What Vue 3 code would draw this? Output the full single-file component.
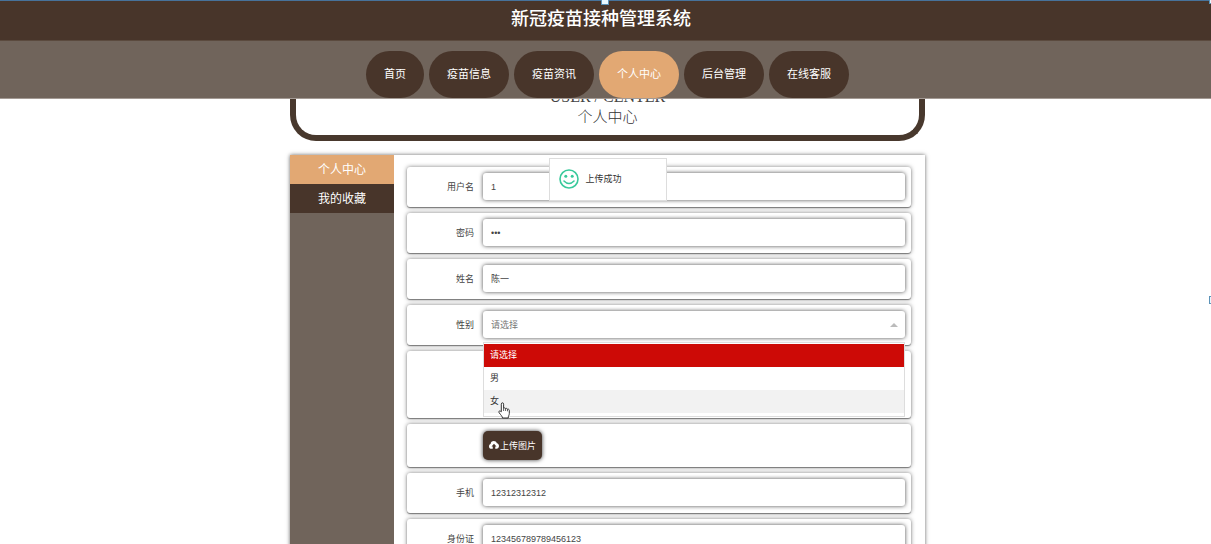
<script setup>
import { ref } from 'vue'

const links = ['首页', '疫苗信息', '疫苗资讯', '个人中心', '后台管理', '在线客服']
const current = '个人中心'
const options = ['请选择', '男', '女']
const gender = ref('请选择')
const hovered = '女'
const form = ref({ user: '1', password: '123', name: '陈一', phone: '12312312312', card: '123456789789456123' })
</script>

<template>
  <div class="page">
    <header class="top">
      <i class="handle handle-top"></i>
      <i class="handle handle-corner"></i>
      <h1>新冠疫苗接种管理系统</h1>
      <nav>
        <a v-for="l in links" :key="l" href="#" :class="{ active: l === current }">{{ l }}</a>
      </nav>
    </header>
    <i class="handle handle-side"></i>

    <div class="container">
      <section class="banner">
        <p class="en">USER / CENTER</p>
        <h2>个人中心</h2>
      </section>

      <main class="panel">
        <aside>
          <a href="#" class="active">个人中心</a>
          <a href="#">我的收藏</a>
        </aside>
        <form @submit.prevent>
          <div class="row">
            <label for="user">用户名</label>
            <input id="user" v-model="form.user" class="field" type="text" />
          </div>
          <div class="row">
            <label for="password">密码</label>
            <input id="password" v-model="form.password" class="field" type="password" />
          </div>
          <div class="row">
            <label for="name">姓名</label>
            <input id="name" v-model="form.name" class="field" type="text" />
          </div>
          <div class="row">
            <label for="gender">性别</label>
            <div class="select">
              <select id="gender" v-model="gender" class="field">
                <option v-for="o in options" :key="o">{{ o }}</option>
              </select>
              <i class="arrow"></i>
              <ul class="menu" role="listbox" aria-label="性别">
                <li v-for="o in options" :key="o" role="option" :aria-selected="o === gender"
                  :class="{ chosen: o === gender, hover: o === hovered }" @click="gender = o">
                  {{ o }}
                  <svg v-if="o === hovered" class="cursor" viewBox="0 0 12 17" width="12" height="17">
                    <path d="M3.3 9.8V2.2C3.3.3 5.6.3 5.6 2.2V6.3C6.2 5.6 7.4 5.8 7.6 6.7C8.3 6.1 9.3 6.4 9.5 7.3C10.3 6.9 11.3 7.3 11.3 8.4V11.5C11.3 13.2 10.2 14 10.2 16H4.5C4.3 14.3 2.8 13 1.2 10.8C.1 9.3 1.5 8.2 3.3 9.8Z" fill="#fff" stroke="#333" stroke-width="1" stroke-linejoin="round" />
                    <path d="M5.6 6.3V9M7.6 6.7V9M9.5 7.3V9.3" fill="none" stroke="#333" stroke-width=".8" />
                  </svg>
                </li>
              </ul>
            </div>
          </div>
          <div class="row photo"></div>
          <div class="row upload">
            <button type="button">
              <svg viewBox="0 0 20 16" width="10" height="8">
                <path d="M5 15.5C2 15.5 0 13.5 0 10.8C0 8.4 1.5 6.8 3.2 6.2C3.3 2.6 6 0 9.5 0C12.5 0 14.8 1.8 15.7 4.6C18.3 5 20 7.3 20 10C20 13.2 17.8 15.5 15 15.5H12.5V11H15L10 5.5L5 11H7.5V15.5Z" fill="#fff" />
              </svg>
              <span>上传图片</span>
            </button>
          </div>
          <div class="row">
            <label for="phone">手机</label>
            <input id="phone" v-model="form.phone" class="field" type="text" />
          </div>
          <div class="row">
            <label for="card">身份证</label>
            <input id="card" v-model="form.card" class="field" type="text" />
          </div>
        </form>
      </main>
    </div>

    <div class="toast" role="status">
      <svg viewBox="0 0 20 20" width="20" height="20">
        <circle cx="10" cy="10" r="9" fill="none" stroke="#39c99b" stroke-width="1.6" />
        <circle cx="6.8" cy="7.3" r="1.5" fill="#39c99b" />
        <circle cx="13.2" cy="7.3" r="1.5" fill="#39c99b" />
        <path d="M5 12Q10 17 15 12" fill="none" stroke="#39c99b" stroke-width="1.6" stroke-linecap="round" />
      </svg>
      <span>上传成功</span>
    </div>
  </div>
</template>

<style>
html {
  scrollbar-width: none;
}
body {
  background: #fff;
}
</style>

<style scoped>
.page {
  font-family: "Liberation Sans", "Noto Sans CJK SC", sans-serif;
  font-size: 9px;
  color: #444;
}
.page * {
  box-sizing: border-box;
}
a {
  color: #fff;
  text-decoration: none;
}
.top {
  position: fixed;
  z-index: 10;
  top: 0;
  left: 0;
  right: 0;
  background: #70645b;
  border-bottom: 1px solid #a39a94;
}
h1 {
  margin: 0;
  padding-right: 9px;
  height: 41px;
  line-height: 36px;
  border-top: 1px solid #47729a;
  border-bottom: 1px solid #5b4a3e;
  background: #48352a;
  color: #fff;
  font-size: 18px;
  font-weight: 500;
  text-align: center;
}
nav {
  display: flex;
  justify-content: center;
  gap: 5px;
  padding: 10px 0 0 4px;
}
nav a {
  padding: 0 18px;
  height: 47px;
  line-height: 47px;
  border-radius: 24px;
  background: #48352a;
  font-size: 11px;
}
nav a.active,
aside a.active {
  background: #e2a873;
}
.handle {
  position: absolute;
  width: 8px;
  height: 8px;
  border: 1px solid #5b93b8;
  background: #e8f8ff;
}
.handle-top {
  top: -3px;
  left: calc(50% - 5px);
}
.handle-corner {
  top: -4px;
  right: -6px;
}
.handle-side {
  position: fixed;
  top: 296px;
  right: -6px;
}
.container {
  width: 100%;
  max-width: 639px;
  margin: 0 auto;
  padding-left: 4px;
}
.banner {
  padding: 87px 0 8px;
  border: solid #48382d;
  border-width: 0 6px 6px;
  border-radius: 0 0 26px 26px;
  text-align: center;
}
.en {
  margin: 0;
  font: 16px/20px "Liberation Serif", serif;
  color: #444;
}
h2 {
  margin: 0;
  font-size: 15px;
  line-height: 20px;
  font-weight: 300;
  color: #333;
}
.panel {
  display: flex;
  margin-top: 14px;
  box-shadow: 0 0 4px rgba(0, 0, 0, 0.6);
}
aside {
  flex: none;
  width: 104px;
  background: #70645b;
}
aside a {
  display: block;
  height: 29px;
  padding-top: 1px;
  line-height: 29px;
  background: #48352a;
  font-size: 12px;
  text-align: center;
}
form {
  flex: 1;
  display: flex;
  flex-direction: column;
  gap: 6px;
  padding: 12px 14px 13px 13px;
}
.row {
  display: flex;
  align-items: center;
  min-height: 40px;
  padding: 6px 6px 7px 0;
  border-radius: 3px;
  background: #fff;
  box-shadow: 0 0 4px rgba(0, 0, 0, 0.5), 0 1px 1px rgba(0, 0, 0, 0.4);
}
.row.photo {
  min-height: 67px;
}
.row.upload {
  min-height: 43px;
  padding-left: 76px;
}
label {
  flex: none;
  width: 76px;
  padding-right: 9px;
  text-align: right;
}
.field {
  display: block;
  flex: 1;
  min-width: 0;
  width: 100%;
  height: 27px;
  padding: 0 8px;
  border: 0;
  border-radius: 3px;
  outline: 0;
  background: #fff;
  box-shadow: 0 0 4px rgba(0, 0, 0, 0.7);
  color: #444;
  font-family: inherit;
  font-size: 9px;
  appearance: none;
}
.select {
  position: relative;
  flex: 1;
}
.select .field {
  color: #777;
}
.arrow {
  position: absolute;
  right: 7px;
  top: 12px;
  border: solid transparent;
  border-width: 0 4px 4px;
  border-bottom-color: #bbb;
}
.menu {
  position: absolute;
  z-index: 2;
  top: 31px;
  left: 0;
  right: 0;
  margin: 0;
  padding: 1px 0 3px;
  border: 1px solid #ddd;
  background: #fff;
  list-style: none;
  color: #333;
}
.menu li {
  position: relative;
  height: 23px;
  line-height: 23px;
  padding: 0 6px;
}
.menu .chosen {
  background: #cd0a06;
  color: #fff;
}
.menu .hover {
  background: #f2f2f2;
}
.cursor {
  position: absolute;
  left: 14px;
  top: 12px;
}
button {
  display: flex;
  align-items: center;
  gap: 1px;
  height: 29px;
  padding: 0 6px;
  border: 0;
  border-radius: 5px;
  background: #48352a;
  box-shadow: 0 0 4px rgba(0, 0, 0, 0.8);
  color: #fff;
  font-family: inherit;
  font-size: 9px;
}
.toast {
  position: fixed;
  z-index: 20;
  top: 158px;
  left: calc(50% - 57px);
  display: flex;
  align-items: center;
  gap: 7px;
  width: 118px;
  height: 43px;
  box-sizing: border-box;
  padding: 0 0 2px 9px;
  border: 1px solid #ddd;
  background: #fff;
  color: #333;
}
</style>
